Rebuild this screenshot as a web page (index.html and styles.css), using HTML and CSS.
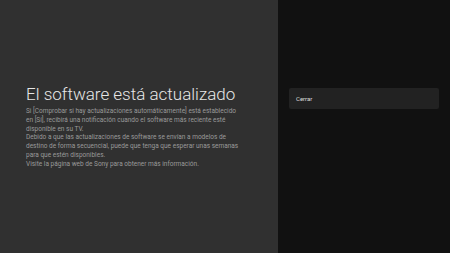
FILE: index.html
```html
<!DOCTYPE html>
<html lang="es">
<head>
    <meta charset="UTF-8">
    <meta name="viewport" content="width=device-width, initial-scale=1.0">
    <title>Actualización de software</title>
    <link rel="stylesheet" href="styles.css">
</head>
<body>

<div class="screen">
    <div class="info-panel">
        <h1>El software está actualizado</h1>
        <p class="desc">
            Si [Comprobar si hay actualizaciones automáticamente] está establecido en [Sí], recibirá una notificación cuando el software más reciente esté disponible en su TV.<br>
            Debido a que las actualizaciones de software se envían a modelos de destino de forma secuencial, puede que tenga que esperar unas semanas para que estén disponibles.<br>
            Visite la página web de Sony para obtener más información.
        </p>
    </div>

    <div class="action-panel">
        <button class="action-btn">Cerrar</button>
    </div>
</div>

</body>
</html>
```

FILE: styles.css
```css
body {
    margin: 0;
    font-family: Roboto, "Liberation Sans", sans-serif;
    background-color: #111111;
}
.screen {
    display: flex;
    width: 450px;
    height: 253px;
}
.info-panel {
    width: 278px;
    box-sizing: border-box;
    padding: 1px 36px 0 26px;
    background-color: #303030;
    display: flex;
    flex-direction: column;
    justify-content: center;
}
h1 {
    margin: 0;
    font-size: 17px;
    font-weight: 300;
    line-height: 19px;
    color: #e6e6e6;
}
.desc {
    margin: 2.7px 0 0;
    font-size: 6.5px;
    line-height: 8.8px;
    color: #9a9a9a;
}
.action-panel {
    flex: 1;
    padding: 88px 11px 0 11px;
    background-color: #111111;
}
.action-btn {
    display: block;
    width: 100%;
    height: 21px;
    padding: 0 7px;
    border: none;
    border-radius: 2px;
    background-color: #222222;
    color: #dddddd;
    font-family: Roboto, "Liberation Sans", sans-serif;
    font-size: 6px;
    text-align: left;
}
```
